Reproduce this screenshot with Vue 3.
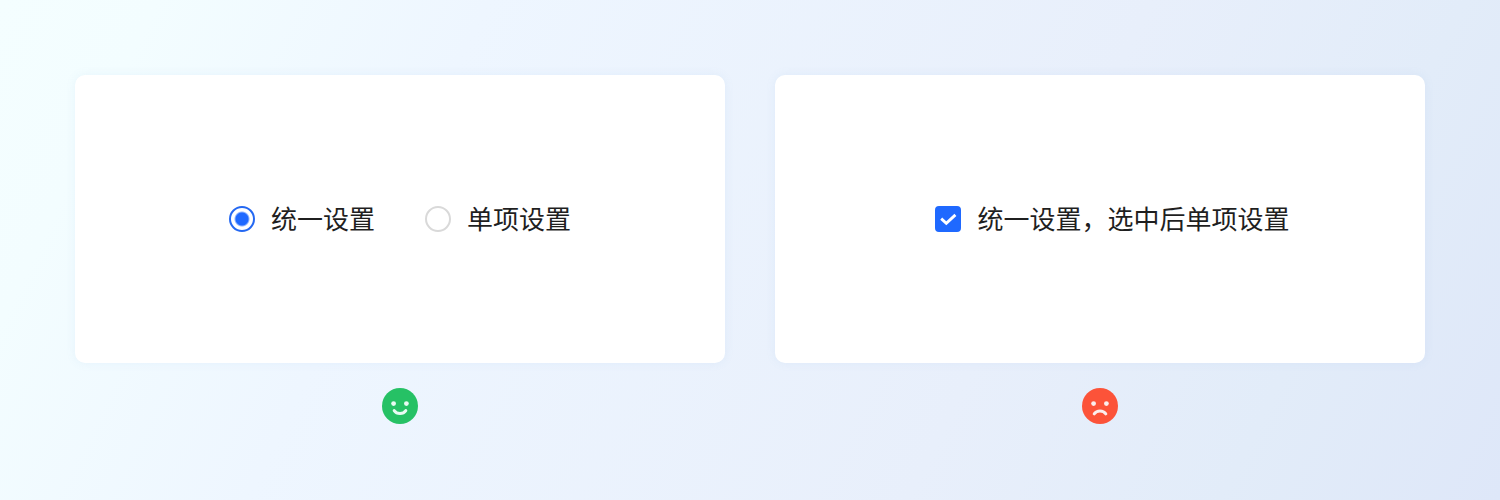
<script setup>
import { ref } from 'vue'

const mode = ref('all')
const unified = ref(true)
const modes = [
  { value: 'all', label: '统一设置' },
  { value: 'single', label: '单项设置' },
]
</script>

<template>
  <main class="page">
    <section class="example">
      <div class="card">
        <div class="options" role="radiogroup" aria-label="设置">
          <label v-for="m in modes" :key="m.value" class="option">
            <input v-model="mode" class="radio" type="radio" name="mode" :value="m.value" />
            <span class="text">{{ m.label }}</span>
          </label>
        </div>
      </div>
      <svg class="face" viewBox="0 0 36 36" aria-hidden="true">
        <circle cx="18" cy="18" r="18" fill="#26c165" />
        <circle cx="11.6" cy="15.6" r="2.4" fill="#e9fbf3" />
        <circle cx="24.4" cy="15.6" r="2.4" fill="#e9fbf3" />
        <path d="M12.2 22.6C14.8 26.5 21.2 26.5 23.8 22.6" fill="none" stroke="#e9fbf3" stroke-width="3" stroke-linecap="round" />
      </svg>
    </section>

    <section class="example">
      <div class="card card-check">
        <label class="option">
          <span class="check-wrap">
            <input v-model="unified" class="check" type="checkbox" />
            <svg v-if="unified" class="tick" viewBox="0 0 26 26" aria-hidden="true">
              <path d="M6.2 12.7L11.3 17.3L20.4 8.9" fill="none" stroke="#fff" stroke-width="2.9" />
            </svg>
          </span>
          <span class="text">统一设置，选中后单项设置</span>
        </label>
      </div>
      <svg class="face" viewBox="0 0 36 36" aria-hidden="true">
        <circle cx="18" cy="18" r="18" fill="#fc5339" />
        <circle cx="11.6" cy="15.6" r="2.4" fill="#fbeeee" />
        <circle cx="24.4" cy="15.6" r="2.4" fill="#fbeeee" />
        <path d="M12.2 25.8C14.8 22 21.2 22 23.8 25.8" fill="none" stroke="#fbeeee" stroke-width="3" stroke-linecap="round" />
      </svg>
    </section>
  </main>
</template>

<style>
body {
  margin: 0;
}
</style>

<style scoped>
.page {
  box-sizing: border-box;
  min-height: 100vh;
  padding: 75px 5%;
  display: grid;
  grid-template-columns: 1fr 1fr;
  align-items: start;
  gap: 50px;
  background: linear-gradient(116deg, #f4feff 0%, #f3fdff 9%, #eef6ff 28%, #e8effb 66%, #e2ecf9 84%, #dee7f9 100%);
  color: #1f1f1f;
  font: 26px/36px "Noto Sans CJK SC", sans-serif;
}
.example {
  display: flex;
  flex-direction: column;
  align-items: center;
  gap: 25px;
}
.card {
  box-sizing: border-box;
  width: 100%;
  min-height: 288px;
  display: flex;
  align-items: center;
  justify-content: center;
  border-radius: 10px;
  background: #fff;
  box-shadow: 0 0 10px rgba(120, 170, 220, 0.1);
}
.card-check {
  padding-left: 25px;
}
.options {
  display: flex;
  flex-wrap: wrap;
  gap: 50px;
}
.option {
  display: flex;
  align-items: center;
  gap: 16px;
  cursor: pointer;
}
.text {
  padding-bottom: 2px;
}
.radio {
  appearance: none;
  box-sizing: border-box;
  width: 26px;
  height: 26px;
  margin: 0;
  border: 2px solid #d9d9d9;
  border-radius: 50%;
  background: #fff;
}
.radio:checked {
  border-color: #2468f2;
  background: radial-gradient(circle, #1f69ff 6px, #fff 8px);
}
.check-wrap {
  position: relative;
  display: flex;
}
.check {
  appearance: none;
  box-sizing: border-box;
  width: 26px;
  height: 26px;
  margin: 0;
  border: 2px solid #d9d9d9;
  border-radius: 4px;
}
.check:checked {
  border-color: #1f69ff;
  background: #1f69ff;
}
.tick {
  position: absolute;
  inset: 0;
  pointer-events: none;
}
.face {
  width: 36px;
  height: 36px;
}
</style>
